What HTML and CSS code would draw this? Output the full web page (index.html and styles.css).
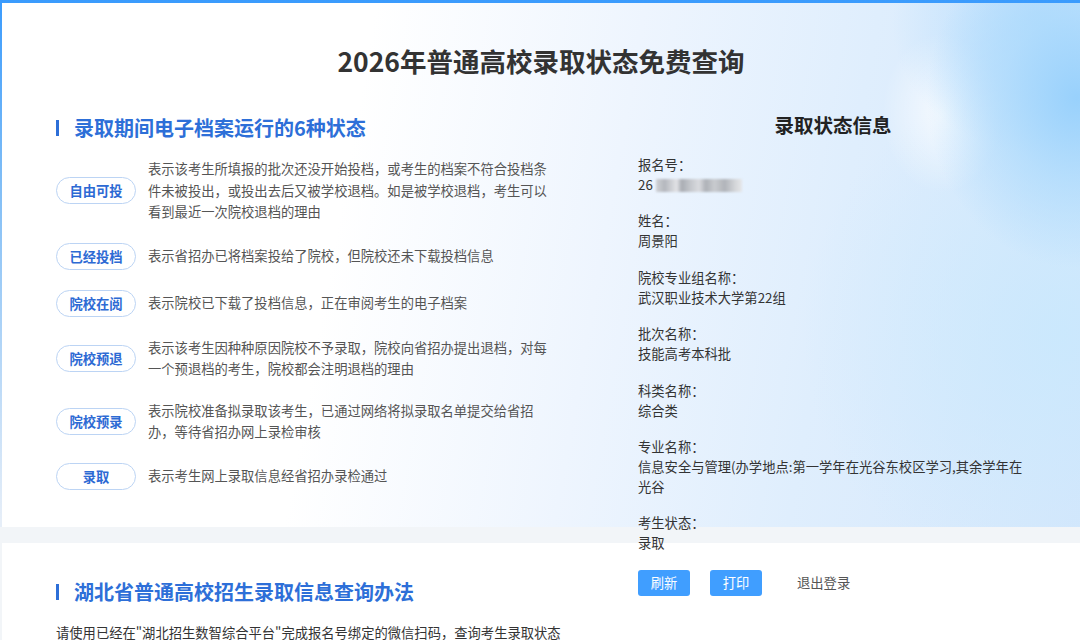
FILE: index.html
```html
<!DOCTYPE html>
<html lang="zh-CN">
<head>
    <meta charset="UTF-8">
    <meta name="viewport" content="width=device-width, initial-scale=1.0">
    <title>2026年普通高校录取状态免费查询</title>
    <link rel="stylesheet" href="styles.css">
</head>
<body>
    <div class="page">
        <!-- 顶部：状态说明 -->
        <section class="hero">
            <h1 class="hero-title">2026年普通高校录取状态免费查询</h1>
            <div class="states">
                <h2 class="sec-title">录取期间电子档案运行的6种状态</h2>
                <ul class="state-list">
                    <li class="state-row">
                        <span class="badge">自由可投</span>
                        <p class="state-desc">表示该考生所填报的批次还没开始投档，或考生的档案不符合投档条件未被投出，或投出去后又被学校退档。如是被学校退档，考生可以看到最近一次院校退档的理由</p>
                    </li>
                    <li class="state-row">
                        <span class="badge">已经投档</span>
                        <p class="state-desc">表示省招办已将档案投给了院校，但院校还未下载投档信息</p>
                    </li>
                    <li class="state-row">
                        <span class="badge">院校在阅</span>
                        <p class="state-desc">表示院校已下载了投档信息，正在审阅考生的电子档案</p>
                    </li>
                    <li class="state-row">
                        <span class="badge">院校预退</span>
                        <p class="state-desc">表示该考生因种种原因院校不予录取，院校向省招办提出退档，对每一个预退档的考生，院校都会注明退档的理由</p>
                    </li>
                    <li class="state-row">
                        <span class="badge">院校预录</span>
                        <p class="state-desc">表示院校准备拟录取该考生，已通过网络将拟录取名单提交给省招办，等待省招办网上录检审核</p>
                    </li>
                    <li class="state-row">
                        <span class="badge">录取</span>
                        <p class="state-desc">表示考生网上录取信息经省招办录检通过</p>
                    </li>
                </ul>
            </div>
        </section>

        <!-- 查询办法 -->
        <section class="guide">
            <h2 class="sec-title">湖北省普通高校招生录取信息查询办法</h2>
            <p class="guide-text">请使用已经在"湖北招生数智综合平台"完成报名号绑定的微信扫码，查询考生录取状态</p>
        </section>

        <!-- 查询结果浮层 -->
        <aside class="result-panel">
            <h3 class="result-title">录取状态信息</h3>
            <dl class="fields">
                <div class="field">
                    <dt>报名号：</dt>
                    <dd>26<span class="masked"></span></dd>
                </div>
                <div class="field">
                    <dt>姓名：</dt>
                    <dd>周景阳</dd>
                </div>
                <div class="field">
                    <dt>院校专业组名称：</dt>
                    <dd>武汉职业技术大学第22组</dd>
                </div>
                <div class="field">
                    <dt>批次名称：</dt>
                    <dd>技能高考本科批</dd>
                </div>
                <div class="field">
                    <dt>科类名称：</dt>
                    <dd>综合类</dd>
                </div>
                <div class="field">
                    <dt>专业名称：</dt>
                    <dd>信息安全与管理(办学地点:第一学年在光谷东校区学习,其余学年在光谷</dd>
                </div>
                <div class="field">
                    <dt>考生状态：</dt>
                    <dd>录取</dd>
                </div>
            </dl>
            <div class="actions">
                <button class="btn">刷新</button>
                <button class="btn">打印</button>
                <button class="btn btn-text">退出登录</button>
            </div>
        </aside>
    </div>
</body>
</html>
```

FILE: styles.css
```css
/* 全局 */
body {
    margin: 0;
    font-family: "Noto Sans CJK SC", "Noto Sans", sans-serif;
    background-color: #f2f5f8;
    color: #333;
}
ul, dl, dd, p, h1, h2, h3 {
    margin: 0;
    padding: 0;
}
.page {
    position: relative;
    padding: 3px 0 0 2px;
    min-height: 637px;
    background-color: #f2f5f8;
    background-image: linear-gradient(180deg, #3a9bfd 0, #7fbdf6 180px, #e6eef8 520px);
    background-size: 100% 527px;
    background-repeat: no-repeat;
    overflow: hidden;
}

/* 顶部卡片 */
.hero {
    height: 524px;
    margin-bottom: 16px;
    box-sizing: border-box;
    padding: 38px 0 0 54px;
    background:
        radial-gradient(ellipse 150px 170px at 1075px 95px, rgba(150, 208, 252, 0.95) 0, rgba(172, 218, 252, 0.7) 50%, rgba(190, 226, 252, 0) 100%),
        radial-gradient(ellipse 150px 130px at 1040px 20px, rgba(178, 220, 252, 0.9) 0, rgba(178, 220, 252, 0) 100%),
        radial-gradient(ellipse 60px 80px at 940px 110px, rgba(255, 255, 255, 0.7) 0, rgba(255, 255, 255, 0) 100%),
        radial-gradient(ellipse 260px 260px at 1060px 330px, rgba(200, 232, 253, 0.8) 0, rgba(200, 232, 253, 0) 100%),
        linear-gradient(100deg, #ffffff 32%, #eef5fe 55%, #dfeefd 75%, #d4e7fc 100%);
}
.hero-title {
    margin-left: -54px;
    text-align: center;
    font-size: 26.5px;
    line-height: 40px;
    font-weight: bold;
    color: #333;
}
.states {
    margin-top: 33px;
}

/* 小标题 */
.sec-title {
    display: flex;
    align-items: center;
    font-size: 20px;
    line-height: 28px;
    font-weight: bold;
    color: #2d6fd8;
}
.sec-title::before {
    content: "";
    width: 3px;
    height: 16px;
    margin-right: 15px;
    background-color: #2d6fd8;
}

/* 状态列表 */
.state-list {
    list-style: none;
    margin-top: 16px;
}
.state-row {
    display: flex;
    align-items: center;
    margin-bottom: 20px;
}
.badge {
    flex: none;
    width: 80px;
    height: 27px;
    box-sizing: border-box;
    margin-right: 12px;
    border: 1px solid #bcd4f4;
    border-radius: 14px;
    background-color: #fff;
    font-size: 13.3px;
    line-height: 25px;
    font-weight: bold;
    text-align: center;
    color: #2d6ad4;
}
.state-desc {
    width: 404px;
    font-size: 13.3px;
    line-height: 21.5px;
    color: #555;
}

/* 查询办法 */
.guide {
    height: 200px;
    padding: 35px 0 0 54px;
    background-color: #fff;
}
.guide-text {
    margin-top: 16px;
    font-size: 13.3px;
    line-height: 22px;
    color: #333;
}

/* 结果浮层 */
.result-panel {
    position: absolute;
    left: 638px;
    top: 110px;
    width: 390px;
}
.result-title {
    text-align: center;
    font-size: 19.5px;
    line-height: 30px;
    font-weight: bold;
    color: #222;
}
.fields {
    margin-top: 15px;
}
.field {
    margin-bottom: 16.4px;
    font-size: 13.3px;
    line-height: 20px;
    color: #333;
}
.masked {
    display: inline-block;
    width: 86px;
    height: 13px;
    margin-left: 3px;
    vertical-align: -2px;
    background: linear-gradient(90deg, #d0d2d6 0, #b4b7bd 10%, #c8cacf 16%, #e2e3e6 24%, #a9adb3 30%, #c4c7cc 40%, #dadbdf 50%, #aeb1b7 58%, #c9cbcf 68%, #b1b4ba 80%, #d4d6d9 92%, #e6e7e9 100%);
    filter: blur(0.8px);
}
.actions {
    display: flex;
    gap: 20px;
}
.btn {
    width: 52px;
    height: 26px;
    padding: 0;
    border: none;
    border-radius: 3px;
    background-color: #409eff;
    font-family: inherit;
    font-size: 13.3px;
    color: #fff;
    cursor: pointer;
}
.btn-text {
    width: auto;
    padding: 0 15px;
    background-color: transparent;
    color: #555;
}
```
